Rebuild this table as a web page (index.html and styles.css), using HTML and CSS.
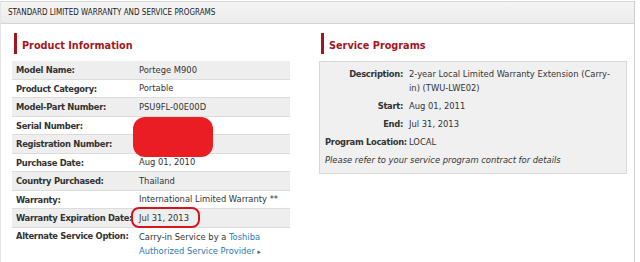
FILE: index.html
```html
<!DOCTYPE html>
<html>
<head>
<meta charset="utf-8">
<link rel="stylesheet" href="styles.css">
</head>
<body>
<div class="page">
  <div class="topbar">STANDARD LIMITED WARRANTY AND SERVICE PROGRAMS</div>
  <div class="cols">
    <div class="left">
      <h2 class="heading">Product Information</h2>
      <div class="table">
        <div class="row shade"><div class="lab">Model Name:</div><div class="val">Portege M900</div></div>
        <div class="row"><div class="lab">Product Category:</div><div class="val">Portable</div></div>
        <div class="row shade"><div class="lab">Model-Part Number:</div><div class="val">PSU9FL-00E00D</div></div>
        <div class="row"><div class="lab">Serial Number:</div><div class="val"></div></div>
        <div class="row shade"><div class="lab">Registration Number:</div><div class="val"></div></div>
        <div class="row"><div class="lab">Purchase Date:</div><div class="val">Aug 01, 2010</div></div>
        <div class="row shade"><div class="lab">Country Purchased:</div><div class="val">Thailand</div></div>
        <div class="row"><div class="lab">Warranty:</div><div class="val">International Limited Warranty **</div></div>
        <div class="row shade"><div class="lab">Warranty Expiration Date:</div><div class="val"><span class="circled">Jul 31, 2013</span></div></div>
        <div class="row tall"><div class="lab">Alternate Service Option:</div><div class="val"><div>Carry-in Service by a <span class="link">Toshiba</span></div><div><span class="link">Authorized Service Provider</span> <span class="arrow">▸</span></div></div></div>
        <div class="redact"></div>
      </div>
    </div>
    <div class="right">
      <h2 class="heading">Service Programs</h2>
      <div class="box">
        <div class="srow"><div class="slab">Description:</div><div class="sval">2-year Local Limited Warranty Extension (Carry-in) (TWU-LWE02)</div></div>
        <div class="srow"><div class="slab">Start:</div><div class="sval">Aug 01, 2011</div></div>
        <div class="srow"><div class="slab">End:</div><div class="sval">Jul 31, 2013</div></div>
        <div class="srow"><div class="slab">Program Location:</div><div class="sval">LOCAL</div></div>
        <div class="note">Please refer to your service program contract for details</div>
      </div>
    </div>
  </div>
</div>
</body>
</html>
```
FILE: styles.css
```css
* { box-sizing: border-box; }
html, body { margin: 0; padding: 0; background: #fff; }
body {
  font-family: "DejaVu Sans Condensed", "DejaVu Sans", sans-serif;
  font-size: 9.3px;
  color: #333;
  width: 640px;
  height: 262px;
  overflow: hidden;
}
.page {
  width: 635px;
  height: 262px;
  border-right: 1px solid #cfcfcf;
  border-left: 1px solid #e4e4e4;
}
.topbar {
  height: 23px;
  margin-top: 1px;
  border-top: 1px solid #d8d8d8;
  border-bottom: 1px solid #d4d4d4;
  background: linear-gradient(#f5f5f5, #ebebeb);
  padding: 6px 0 0 7px;
  font-size: 8px;
  color: #222;
  white-space: nowrap;
}
.cols {
  display: flex;
  padding: 9px 0 0 11px;
}
.left { width: 278px; }
.right { margin-left: 29px; width: 308px; }
.heading {
  margin: 0 0 7px 2px;
  height: 21px;
  border-left: 3px solid #a3161d;
  padding: 5px 0 0 5px;
  font-size: 10.8px;
  font-weight: bold;
  color: #a3161d;
  line-height: 15px;
}
.table { position: relative; }
.row {
  display: flex;
  height: 18.5px;
  align-items: center;
  border-bottom: 1px solid #dcdcdc;
  background: #fff;
}
.row.shade { background: #eeeeee; }
.row.tall { height: 32px; align-items: flex-start; padding-top: 2px; border-bottom: none; }
.lab { width: 127px; padding-left: 4px; font-weight: bold; color: #333; white-space: nowrap; letter-spacing: -0.3px; }
.val { flex: 1; color: #333; line-height: 14px; white-space: nowrap; }
.link { color: #2b7bb5; }
.arrow { font-size: 7px; color: #555; }
.circled { position: relative; }
.circled::after {
  content: "";
  position: absolute;
  left: -8px; top: -5px; right: -11px; bottom: -5px;
  border: 2px solid #d5141f;
  border-radius: 8px;
}
.redact {
  position: absolute;
  left: 121px; top: 56px;
  width: 80px; height: 40px;
  background: #ea1c24;
  border-radius: 12px;
}
.box {
  background: #f0f0f0;
  border: 1px solid #d9d9d9;
  padding: 5px 12px 6px 5px;
}
.srow { display: flex; margin-bottom: 4px; line-height: 14px; }
.slab { width: 84px; text-align: right; font-weight: bold; padding-right: 6px; flex: none; white-space: nowrap; letter-spacing: -0.3px; }
.sval { flex: 1; }
.note { font-style: italic; line-height: 14px; }
```
